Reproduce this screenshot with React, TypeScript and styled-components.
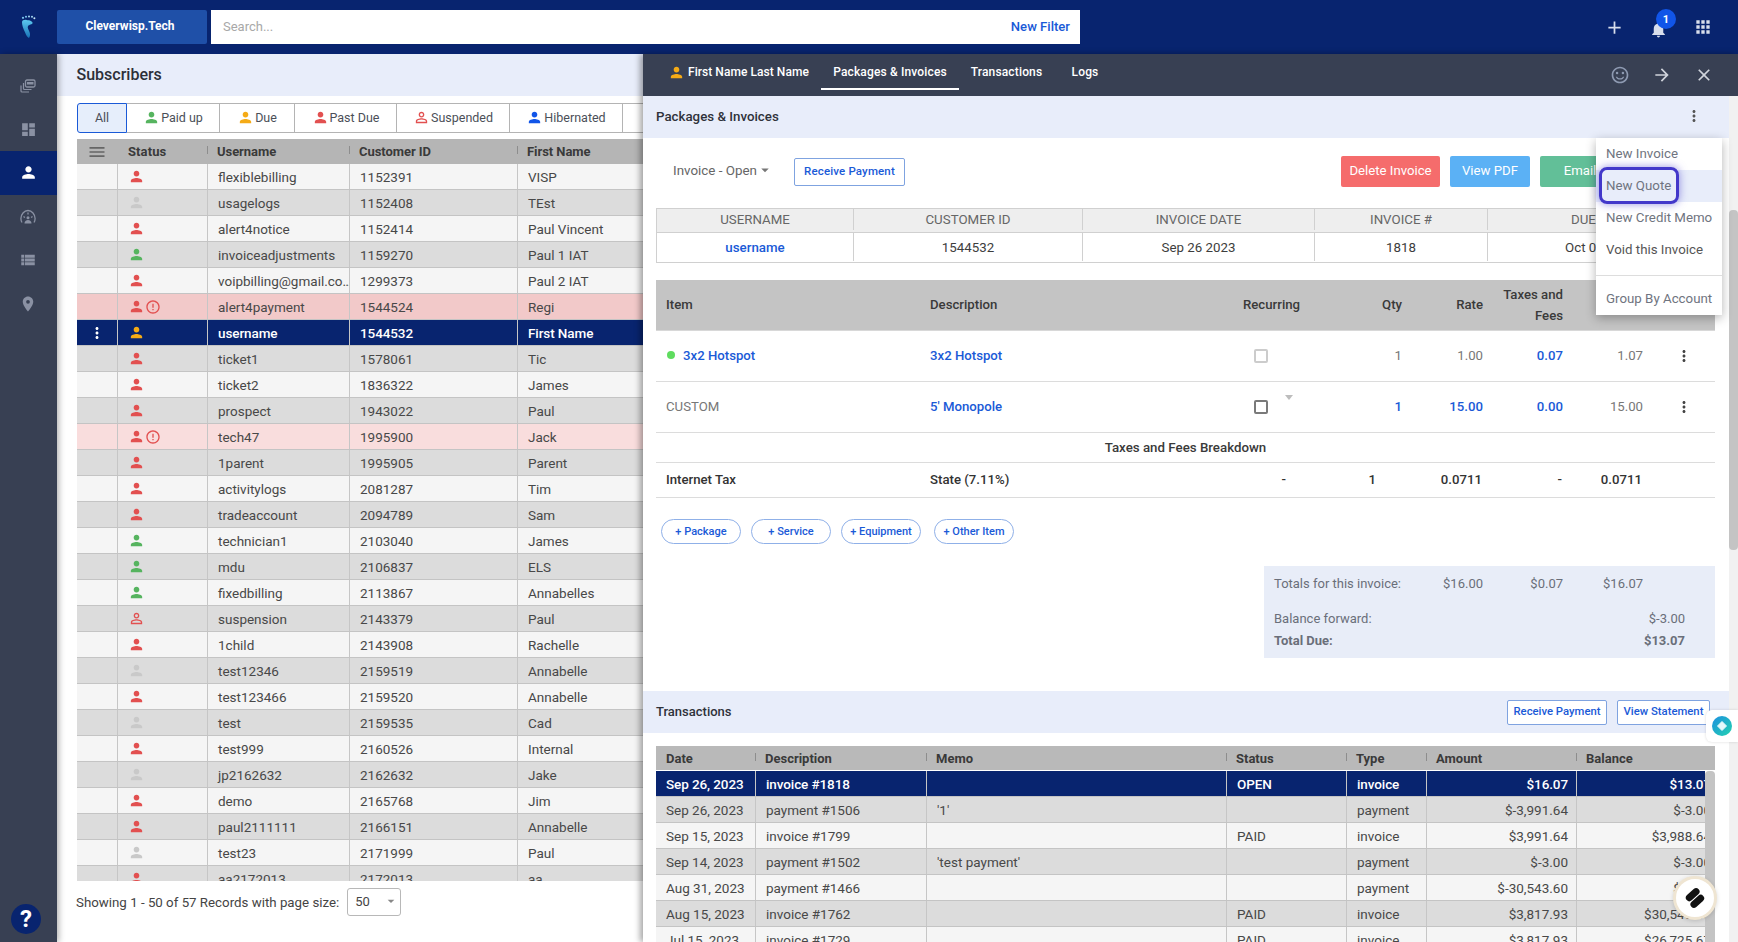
import React from "react";
import styled, { createGlobalStyle } from "styled-components";
import {
  MdAdd, MdApps, MdArrowForward, MdArrowDropDown, MdClose, MdDashboard, MdErrorOutline, MdLocationOn,
  MdMenu, MdMoreVert, MdNotifications, MdOutlineSentimentSatisfiedAlt, MdPerson, MdPersonOutline, MdViewList,
} from "react-icons/md";

const Global = createGlobalStyle`
  html, body { margin: 0; padding: 0; height: 100%; overflow: hidden; background: #fff; }
  body { font-family: Roboto, "Liberation Sans", sans-serif; color: #444; }
  #root { height: 100%; }
  * { box-sizing: border-box; }
`;

const C = {
  navy: "#08246f",
  slate: "#384053",
  band: "#e8edfa",
  blue: "#1a5ad7",
  light: "#f5f5f5",
  dark: "#dcdcdc",
  line: "#c6c6c6",
};

const Page = styled.div`
  width: 1738px; height: 942px; display: flex; flex-direction: column; overflow: hidden; position: relative;
`;
const Topbar = styled.header`
  height: 54px; flex: none; background: ${C.navy}; display: flex; align-items: center;
`;
const LogoCell = styled.div`
  width: 57px; flex: none; display: flex; justify-content: center; align-items: center; svg { margin-left: -1px; }
`;
const Tenant = styled.div`
  width: 150px; height: 34px; background: #1f50a8; color: #fff; border-radius: 2px; font-size: 12px; font-weight: 700;
  display: flex; align-items: center; justify-content: center; margin-right: 4px; padding: 0 4px 2px 0;
`;
const SearchBox = styled.div`
  width: 869px; height: 34px; background: #fff; display: flex; align-items: center; justify-content: space-between;
  padding: 0 10px 2px 12px; font-size: 13px; color: #a8a8a8;
`;
const NewFilter = styled.span`
  color: ${C.blue}; font-weight: 500; font-size: 13.1px;
`;
const TopIcons = styled.div`
  margin-left: auto; display: flex; align-items: center; gap: 24px; padding-right: 25px; color: #d8deec;
`;
const BellWrap = styled.div`
  position: relative; display: flex; margin: 4px 1px 0 0;
`;
const Badge = styled.span`
  position: absolute; left: 7px; top: -10.500px; width: 20px; height: 20px; border-radius: 50%; background: #1155e8; color: #fff;
  font-size: 11px; font-weight: 700; display: flex; align-items: center; justify-content: center;
`;
const Body = styled.div`
  flex: 1; display: flex; min-height: 0;
`;
const Sidebar = styled.nav`
  width: 57px; flex: none; background: ${C.slate}; padding-top: 10px; display: flex; flex-direction: column; position: relative; z-index: 2;
  box-shadow: 2px 0 6px rgba(0,0,0,.3);
`;
const SideItem = styled.div<{ $active?: boolean }>`
  height: 43.6px; display: flex; align-items: center; justify-content: center; padding-right: 1px; color: ${p => (p.$active ? "#fff" : "#8a91a3")};
  background: ${p => (p.$active ? C.navy : "transparent")};
`;
const HelpBubble = styled.div`
  position: absolute; left: 11px; bottom: 8px; width: 30px; height: 30px; border-radius: 50%; background: ${C.navy}; color: #fff;
  font-size: 24px; font-weight: 700; display: flex; align-items: center; justify-content: center;
`;
const Main = styled.main`
  flex: 1; min-width: 0; overflow: hidden; display: flex; flex-direction: column; background: #fff;
`;
const MainHead = styled.div`
  height: 42px; flex: none; background: ${C.band}; display: flex; align-items: center; padding: 0 0 2px 19.500px;
  font-size: 16px; font-weight: 500; color: #2c2f38;
`;
const Filters = styled.div`
  display: flex; margin: 7px 0 6px 20px; height: 30px; width: 640px; flex: none;
`;
const FilterTab = styled.div<{ $w: number; $active?: boolean }>`
  width: ${p => p.$w}px; flex: none; display: flex; align-items: center; justify-content: center; gap: 1px; font-size: 12.5px; color: #4b4f58;
  border: 1px solid ${p => (p.$active ? C.blue : "#b4b4b4")}; border-left-width: ${p => (p.$active ? 1 : 0)}px; padding-bottom: 1px;
  background: ${p => (p.$active ? "#e6eefb" : "#fff")};
  border-radius: ${p => (p.$active ? "3px 0 0 3px" : "0")};
`;
const Grid = styled.div`
  margin-left: 20px; width: 640px; height: 742px; flex: none; overflow: hidden;
`;
const GridHead = styled.div`
  height: 25px; display: flex; background: #b5b5b5; font-size: 13px; font-weight: 700; color: #3a3a3a; letter-spacing: -.05px;
`;
const HeadCell = styled.div<{ $w: number; $right?: boolean }>`
  width: ${p => p.$w}px; flex: none; display: flex; align-items: center; padding-left: 10px; position: relative;
  justify-content: ${p => (p.$right ? "flex-end" : "flex-start")};
  &::after { content: ""; position: absolute; left: 0; top: 7px; width: 1px; height: 8px; background: #8d8d8d; }
`;
const PlainHeadCell = styled(HeadCell)`
  &::after { display: none; }
`;
const StatusHead = styled(PlainHeadCell)`
  padding-left: 11px; letter-spacing: .1px;
`;
const MenuCell = styled(PlainHeadCell)`
  justify-content: center; padding: 0; color: #666;
`;
const GridRow = styled.div<{ $bg: string; $selected?: boolean }>`
  height: 26px; display: flex; background: ${p => p.$bg}; font-size: 13.5px;
  color: ${p => (p.$selected ? "#fff" : "#484848")}; border-bottom: 1px solid #c4c4c4;
  font-weight: ${p => (p.$selected ? 500 : 400)}; letter-spacing: ${p => (p.$selected ? "-.1px" : "0")};
`;
const TxRow = styled(GridRow)`
  width: 1063px;
  & > div:first-child { border-left: 0; }
`;
const GridCell = styled.div<{ $w: number; $right?: boolean }>`
  width: ${p => p.$w}px; flex: none; display: flex; align-items: center; padding: 0 8px 0 10px; border-left: 1px solid #c6c6c6;
  white-space: nowrap; overflow: hidden; justify-content: ${p => (p.$right ? "flex-end" : "flex-start")};
`;
const UserCell = styled(GridCell)`
  padding-right: 0;
`;
const ActionCell = styled.div<{ $w: number }>`
  width: ${p => p.$w}px; flex: none; display: flex; align-items: center; justify-content: center; color: #fff;
`;
const StatusCell = styled(GridCell)`
  padding-left: 9.500px; gap: 0;
`;
const GridFoot = styled.div`
  display: flex; align-items: center; gap: 8px; margin: 7px 0 0 19px; font-size: 13.3px; color: #444;
`;
const PageSize = styled.div`
  width: 54px; height: 28px; border: 1px solid #b8b8b8; border-radius: 3px; padding: 0 0 2px 7px; display: flex; align-items: center;
  justify-content: space-between; font-size: 13px; color: #444;
  svg { color: #888; margin-right: 1px; }
`;

const Detail = styled.aside`
  width: 1095px; flex: none; display: flex; flex-direction: column; background: #fff; position: relative; z-index: 3;
  box-shadow: -3px 0 6px rgba(0,0,0,.35);
`;
const DetailBar = styled.div`
  height: 42px; flex: none; background: ${C.slate}; display: flex; align-items: flex-start; color: #fff; font-size: 12px; font-weight: 500;
  letter-spacing: .15px; padding-left: 25px; position: relative;
`;
const Tab = styled.div<{ $active?: boolean; $w: number }>`
  width: ${p => p.$w}px; height: 36px; flex: none; display: flex; align-items: center; justify-content: center; gap: 3px; padding-top: 2px;
  border-bottom: 2px solid ${p => (p.$active ? "#fff" : "transparent")};
`;
const NameTab = styled(Tab)`
  justify-content: flex-start; letter-spacing: .05px;
`;
const BarIcons = styled.div`
  margin-left: auto; height: 42px; display: flex; align-items: center; gap: 22px; padding-right: 24px; color: #8e9ab2;
`;
const DetailBody = styled.div`
  flex: 1; display: flex; min-height: 0;
`;
const DetailScroll = styled.div`
  flex: 1; min-width: 0; overflow: hidden; display: flex; flex-direction: column;
`;
const Track = styled.div`
  width: 9px; flex: none; background: #f1f1f1; padding-top: 114px;
`;
const Thumb = styled.div`
  height: 340px; background: #c4c4c4; border-radius: 4px;
`;
const Band = styled.div`
  height: 42px; flex: none; background: ${C.band}; display: flex; align-items: center; padding: 0 14px 2px 13px; font-size: 13.300px; font-weight: 500; color: #2f323a;
`;
const BandDots = styled.div`
  margin-left: auto; margin-right: 12px; display: flex; color: #555;
`;
const InvoiceTools = styled.div`
  height: 70px; flex: none; display: flex; align-items: center; padding: 0 0 2px 30px; position: relative;
`;
const InvoiceState = styled.div`
  display: flex; align-items: center; font-size: 13.4px; color: #666; width: 121px; margin-top: -4px;
  svg { color: #777; margin-left: -1px; }
`;
const OutlineBtn = styled.div<{ $w: number }>`
  width: ${p => p.$w}px; height: 28px; flex: none; border: 1px solid #7fa3e0; border-radius: 2px; background: #fff; color: ${C.blue}; font-size: 11.5px;
  font-weight: 500; letter-spacing: .15px; display: flex; align-items: center; justify-content: center; padding-bottom: 2px;
`;
const SolidBtn = styled.div<{ $w: number; $bg: string }>`
  width: ${p => p.$w}px; height: 31px; flex: none; border-radius: 2px; background: ${p => p.$bg}; color: #fff; font-size: 13.2px; display: flex; align-items: center; justify-content: center; padding-bottom: 2px;
`;
const SolidGroup = styled.div`
  position: absolute; left: 698px; top: 18px; display: flex; gap: 10px;
`;
const InfoTable = styled.div`
  margin: 0 0 0 13px; width: 1059px; flex: none; border: 1px solid #d0d0d0;
`;
const InfoRow = styled.div<{ $head?: boolean }>`
  display: flex; height: ${p => (p.$head ? 24 : 29)}px; background: ${p => (p.$head ? "#eeeeee" : "#fff")};
  border-bottom: ${p => (p.$head ? "1px solid #d0d0d0" : "0")}; padding-bottom: ${p => (p.$head ? 2 : 1)}px;
  font-size: 13.3px; color: ${p => (p.$head ? "#666" : "#3d3d3d")};
`;
const InfoCell = styled.div<{ $w: number; $link?: boolean }>`
  width: ${p => p.$w}px; flex: none; display: flex; align-items: center; justify-content: center; position: relative;
  color: ${p => (p.$link ? C.blue : "inherit")}; font-weight: ${p => (p.$link ? 500 : "inherit")};
  border-left: 1px solid #d0d0d0; margin-bottom: ${p => (p.$w ? 0 : 0)}px;
  &:first-child { border-left: 0; }
`;
const ItemsTable = styled.div`
  margin: 17px 0 0 13px; width: 1059px; flex: none;
`;
const ItemsHead = styled.div`
  height: 51px; display: flex; align-items: center; background: #c4c4c4; font-size: 13.2px; font-weight: 500; color: #3a3a3a; border-bottom: 1px solid #d8d8d8; padding-bottom: 1px;
`;
const ItemRow = styled.div<{ $h: number; $bold?: boolean }>`
  height: ${p => p.$h}px; display: flex; align-items: center; border-bottom: 1px solid #dcdcdc; font-size: 13.2px; color: ${p => (p.$bold ? "#333" : "#777")};
  font-weight: ${p => (p.$bold ? 500 : 400)}; padding-bottom: 1px;
`;
const ItemCell = styled.div<{ $w: number; $right?: boolean; $link?: boolean; $dark?: boolean }>`
  width: ${p => p.$w}px; flex: none; display: flex; align-items: center; position: relative; white-space: nowrap;
  justify-content: ${p => (p.$right ? "flex-end" : "flex-start")};
  text-align: ${p => (p.$right ? "right" : "left")};
  color: ${p => (p.$link ? C.blue : p.$dark ? "#444" : "inherit")}; font-weight: ${p => (p.$link ? 500 : "inherit")};
  line-height: 21px;
`;
const CheckCell = styled(ItemCell)`
  padding-left: 11px;
`;
const PadText = styled.span`
  padding-left: 10px;
`;
const BreakdownTitle = styled.div`
  width: 100%; text-align: center; font-size: 13.300px; font-weight: 500; color: #3a3a3a;
`;
const GreenDot = styled.span`
  width: 8px; height: 8px; border-radius: 50%; background: #5fdc5f; margin: -2px 8px 0 11px; flex: none;
`;
const Check = styled.span<{ $strong?: boolean }>`
  width: 14px; height: 14px; border: 2px solid ${p => (p.$strong ? "#7a7a7a" : "#cccccc")}; border-radius: 2px; background: #fff;
`;
const TinyCaret = styled.span`
  position: absolute; left: 42px; top: -5px; width: 0; height: 0; border: 4px solid transparent; border-top: 5px solid #bdbdbd;
`;
const Pills = styled.div`
  display: flex; margin: 21px 0 0 18px; gap: 10px; flex: none;
`;
const Pill = styled.div`
  width: 80px; height: 25px; border: 1px solid #8fb0e8; border-radius: 13px; display: flex; align-items: center; justify-content: center; padding-bottom: 1px;
  color: ${C.blue}; font-size: 11px; font-weight: 500; background: #fff; &:last-child { margin-left: 3px; }
`;
const Totals = styled.div`
  margin: 22px 0 0 621px; width: 451px; height: 92px; flex: none; background: #e8edf8; font-size: 13px; color: #6a6f7a; padding: 7px 30px 0 10px;
`;
const TotalLine = styled.div<{ $h: number; $bold?: boolean; $gap?: number }>`
  height: ${p => p.$h}px; display: flex; align-items: center; font-weight: ${p => (p.$bold ? 700 : 400)}; margin-top: ${p => p.$gap ?? 0}px;
`;
const TotalLabel = styled.div`
  margin-right: auto;
`;
const TotalNum = styled.div<{ $w: number }>`
  width: ${p => p.$w}px; text-align: right; flex: none;
`;
const TxBand = styled(Band)`
  margin-top: 33px; gap: 10px; font-size: 13px;
`;
const TxBtnWrap = styled.div`
  margin: 2px 5px 0 auto; display: flex; gap: 10px;
`;
const TxBtn = styled(OutlineBtn)`
  height: 25px; font-size: 11.3px; letter-spacing: 0; padding-bottom: 1px;
`;
const TxGrid = styled.div`
  margin: 13px 0 0 13px; width: 1059px; flex: 1; min-height: 0; overflow: hidden; position: relative;
`;
const TxHead = styled.div`
  height: 25px; display: flex; background: #b9b9b9; font-size: 13px; font-weight: 700; color: #3a3a3a; width: 1063px; border-bottom: 1px solid #fff;
`;
const TxRowsClip = styled.div`
  width: 1049px; overflow: hidden;
`;
const TxScroll = styled.div`
  position: absolute; right: 0; top: 25px; bottom: 0; width: 10px; background: #c4c4c4; border-radius: 4px 4px 0 0;
`;
const Dropdown = styled.div`
  position: absolute; left: 953px; top: 84px; width: 126px; height: 177px; background: #fff; box-shadow: 0 3px 10px rgba(0,0,0,.3); z-index: 5;
  font-size: 13.3px; color: #6f7480; display: flex; flex-direction: column;
`;
const DropItem = styled.div<{ $hover?: boolean; $dark?: boolean }>`
  height: 32px; flex: none; display: flex; align-items: center; padding: 0 0 2px 10px; position: relative; white-space: nowrap;
  background: ${p => (p.$hover ? "#e8edfa" : "transparent")}; color: ${p => (p.$dark ? "#555" : "inherit")};
`;
const FocusRing = styled.span`
  position: absolute; left: 3px; top: -3px; width: 80px; height: 37px; border: 3px solid #4338ca; border-radius: 8px;
  box-shadow: 0 0 8px rgba(67,56,202,.55);
`;
const DropDivider = styled.div`
  height: 1px; background: #ddd; margin-top: 9px;
`;
const DropFoot = styled(DropItem)`
  margin-top: 7px;
`;
const SideWidget = styled.div`
  position: absolute; right: 0; top: 710px; width: 32px; height: 32px; background: #fff; border-radius: 6px 0 0 6px; z-index: 6;
  display: flex; align-items: center; justify-content: center; box-shadow: 0 0 3px rgba(0,0,0,.15);
`;
const FloatBtn = styled.div`
  position: absolute; left: 1673px; top: 876px; width: 44px; height: 44px; border-radius: 50%; background: #fff; border: 3px solid #efe5d2; z-index: 6;
  display: flex; align-items: center; justify-content: center; box-shadow: 0 1px 4px rgba(0,0,0,.15);
`;

type St = "red" | "gray" | "green" | "orange" | "outline";
const stColors: Record<St, string> = { red: "#e25050", gray: "#c9c9c9", green: "#56b45f", orange: "#f5ab16", outline: "#e25050" };

const subs: [string, string, string, St, string?][] = [
  ["flexiblebilling", "1152391", "VISP", "red"],
  ["usagelogs", "1152408", "TEst", "gray"],
  ["alert4notice", "1152414", "Paul Vincent", "red"],
  ["invoiceadjustments", "1159270", "Paul 1 IAT", "green"],
  ["voipbilling@gmail.co…", "1299373", "Paul 2 IAT", "red"],
  ["alert4payment", "1544524", "Regi", "red", "#f2c9c9"],
  ["username", "1544532", "First Name", "orange", C.navy],
  ["ticket1", "1578061", "Tic", "red"],
  ["ticket2", "1836322", "James", "red"],
  ["prospect", "1943022", "Paul", "red"],
  ["tech47", "1995900", "Jack", "red", "#f9dddd"],
  ["1parent", "1995905", "Parent", "red"],
  ["activitylogs", "2081287", "Tim", "red"],
  ["tradeaccount", "2094789", "Sam", "red"],
  ["technician1", "2103040", "James", "green"],
  ["mdu", "2106837", "ELS", "green"],
  ["fixedbilling", "2113867", "Annabelles", "green"],
  ["suspension", "2143379", "Paul", "outline"],
  ["1child", "2143908", "Rachelle", "red"],
  ["test12346", "2159519", "Annabelle", "gray"],
  ["test123466", "2159520", "Annabelle", "red"],
  ["test", "2159535", "Cad", "gray"],
  ["test999", "2160526", "Internal", "red"],
  ["jp2162632", "2162632", "Jake", "gray"],
  ["demo", "2165768", "Jim", "red"],
  ["paul2111111", "2166151", "Annabelle", "red"],
  ["test23", "2171999", "Paul", "gray"],
  ["aa2172013", "2172013", "aa", "red"],
];

const tx = [
  ["Sep 26, 2023", "invoice #1818", "", "OPEN", "invoice", "$16.07", "$13.07"],
  ["Sep 26, 2023", "payment #1506", "'1'", "", "payment", "$-3,991.64", "$-3.00"],
  ["Sep 15, 2023", "invoice #1799", "", "PAID", "invoice", "$3,991.64", "$3,988.64"],
  ["Sep 14, 2023", "payment #1502", "'test payment'", "", "payment", "$-3.00", "$-3.00"],
  ["Aug 31, 2023", "payment #1466", "", "", "payment", "$-30,543.60", "$-3.00"],
  ["Aug 15, 2023", "invoice #1762", "", "PAID", "invoice", "$3,817.93", "$30,540.60"],
  ["Jul 15, 2023", "invoice #1729", "", "PAID", "invoice", "$3,817.93", "$26,725.67"],
];
const txW = [99, 171, 300, 120, 80, 150, 143];
const subW = [40, 90, 142, 168, 140];

function Person({ st, size = 17 }: { st: St; size?: number }) {
  const Icon = st === "outline" ? MdPersonOutline : MdPerson;
  return <Icon size={size} color={stColors[st]} />;
}

function FootLogo() {
  return (
    <svg width="16" height="24" viewBox="0 0 16 24">
      <defs>
        <linearGradient id="ft" x1="0" y1="0" x2="0" y2="1">
          <stop offset="0" stopColor="#5cc8ee" />
          <stop offset="1" stopColor="#1772b8" />
        </linearGradient>
      </defs>
      <circle cx="3" cy="2.800" r="1.100" fill="#7cc6ee" />
      <circle cx="6" cy="1.800" r="1" fill="#7cc6ee" />
      <circle cx="9" cy="1.400" r="1" fill="#a4d8f2" />
      <circle cx="12" cy="1.800" r="1" fill="#a4d8f2" />
      <circle cx="14.400" cy="3.200" r="1" fill="#c9e6f4" />
      <path d="M2 7.200C2 5.400 4 4.700 6.500 4.900c3.400.3 6.300 1.200 6.100 3.200-.2 1.700-3.600 1.500-4.600 3-.9 1.400.6 3.800 1.500 6 .8 2 .8 4.300-.5 5.800-1.300-.4-2.800-2.500-4-5.700C3.200 13.400 2 10.100 2 7.200Z" fill="url(#ft)" />
    </svg>
  );
}

function LayersIcon() {
  return (
    <svg width="16" height="14" viewBox="0 0 16 14" fill="none" stroke="currentColor">
      <rect x="5.500" y="1" width="9.500" height="7" rx="1.500" strokeWidth="1.300" />
      <rect x="7" y="3" width="6.500" height="2.500" fill="currentColor" stroke="none" />
      <path d="M3.500 4v5.500a1 1 0 0 0 1 1h7" strokeWidth="1.200" />
      <path d="M1 6.500v5.500a1 1 0 0 0 1 1h7" strokeWidth="1.200" />
    </svg>
  );
}

function GaugeIcon() {
  return (
    <svg width="16" height="15" viewBox="0 0 16 15" fill="none" stroke="currentColor" strokeWidth="1.300">
      <path d="M2 13.500C1.200 12.300.9 11 .9 9.600.9 5.400 4.100 1.500 8 1.500s7.100 3.900 7.100 8.100c0 1.400-.3 2.700-1.100 3.900" />
      <path d="M8 3.500v2M3.500 7.500l1.400 1M12.500 7.500l-1.400 1" />
      <circle cx="8" cy="8.700" r="1.500" fill="currentColor" stroke="none" />
      <path d="M4.500 14.500c0-2.100 1.500-3.500 3.500-3.500s3.500 1.400 3.500 3.500Z" fill="currentColor" stroke="none" />
    </svg>
  );
}

function SwirlIcon() {
  return (
    <svg width="22" height="22" viewBox="0 0 22 22">
      <g transform="rotate(-42 11 11)">
        <rect x="3.500" y="3.500" width="16" height="7" rx="3.500" fill="#111" />
        <rect x="2.500" y="11.500" width="16" height="7" rx="3.500" fill="#111" />
      </g>
    </svg>
  );
}

function GemIcon() {
  return (
    <svg width="20" height="20" viewBox="0 0 20 20">
      <defs>
        <linearGradient id="gem" x1="0" y1="0" x2="1" y2="1">
          <stop offset="0" stopColor="#1d8fe0" />
          <stop offset="1" stopColor="#22d3b0" />
        </linearGradient>
      </defs>
      <circle cx="10" cy="10" r="10" fill="url(#gem)" />
      <path d="M10 5.500 14.500 10 10 14.500 5.500 10Z" fill="#e4f9fb" stroke="#e4f9fb" strokeLinejoin="round" />
    </svg>
  );
}

export default function App() {
  return (
    <Page>
      <Global />
      <Topbar>
        <LogoCell><FootLogo /></LogoCell>
        <Tenant>Cleverwisp.Tech</Tenant>
        <SearchBox>
          <span>Search...</span>
          <NewFilter>New Filter</NewFilter>
        </SearchBox>
        <TopIcons>
          <MdAdd size={21} />
          <BellWrap>
            <MdNotifications size={19} />
            <Badge>1</Badge>
          </BellWrap>
          <MdApps size={20} />
        </TopIcons>
      </Topbar>
      <Body>
        <Sidebar>
          <SideItem><LayersIcon /></SideItem>
          <SideItem><MdDashboard size={17} /></SideItem>
          <SideItem $active><MdPerson size={19} /></SideItem>
          <SideItem><GaugeIcon /></SideItem>
          <SideItem><MdViewList size={18} /></SideItem>
          <SideItem><MdLocationOn size={18} /></SideItem>
          <HelpBubble>?</HelpBubble>
        </Sidebar>
        <Main>
          <MainHead>Subscribers</MainHead>
          <Filters>
            <FilterTab $w={50} $active>All</FilterTab>
            <FilterTab $w={93}><Person st="green" />Paid up</FilterTab>
            <FilterTab $w={75}><Person st="orange" />Due</FilterTab>
            <FilterTab $w={102}><Person st="red" />Past Due</FilterTab>
            <FilterTab $w={113}><Person st="outline" />Suspended</FilterTab>
            <FilterTab $w={113}><MdPerson size={17} color="#1155e8" />Hibernated</FilterTab>
            <FilterTab $w={90} />
          </Filters>
          <Grid>
            <GridHead>
              <MenuCell $w={subW[0]}><MdMenu size={20} /></MenuCell>
              <StatusHead $w={subW[1]}>Status</StatusHead>
              <HeadCell $w={subW[2]}>Username</HeadCell>
              <HeadCell $w={subW[3]}>Customer ID</HeadCell>
              <HeadCell $w={subW[4]}>First Name</HeadCell>
            </GridHead>
            {subs.map(([user, id, first, st, bg], i) => {
              const selected = st === "orange";
              return (
                <GridRow key={user} $bg={bg ?? (i % 2 ? C.dark : C.light)} $selected={selected}>
                  <ActionCell $w={subW[0]}>{selected && <MdMoreVert size={18} />}</ActionCell>
                  <StatusCell $w={subW[1]}>
                    <Person st={st} />
                    {bg && !selected && <MdErrorOutline size={16} color="#e25050" />}
                  </StatusCell>
                  <UserCell $w={subW[2]}>{user}</UserCell>
                  <GridCell $w={subW[3]}>{id}</GridCell>
                  <GridCell $w={subW[4]}>{first}</GridCell>
                </GridRow>
              );
            })}
          </Grid>
          <GridFoot>
            Showing 1 - 50 of 57 Records with page size:
            <PageSize>50<MdArrowDropDown size={16} /></PageSize>
          </GridFoot>
        </Main>
        <Detail>
          <DetailBar>
            <NameTab $w={153}><MdPerson size={17} color="#f5ab16" />First Name Last Name</NameTab>
            <Tab $w={138} $active>Packages &amp; Invoices</Tab>
            <Tab $w={95}>Transactions</Tab>
            <Tab $w={62}>Logs</Tab>
            <BarIcons>
              <MdOutlineSentimentSatisfiedAlt size={20} />
              <MdArrowForward size={20} color="#d0d4dc" />
              <MdClose size={20} color="#d0d4dc" />
            </BarIcons>
          </DetailBar>
          <DetailBody>
            <DetailScroll>
              <Band>
                Packages &amp; Invoices
                <BandDots><MdMoreVert size={18} /></BandDots>
              </Band>
              <InvoiceTools>
                <InvoiceState>Invoice - Open<MdArrowDropDown size={18} /></InvoiceState>
                <OutlineBtn $w={111}>Receive Payment</OutlineBtn>
                <SolidGroup>
                  <SolidBtn $w={99} $bg="#f56c6c">Delete Invoice</SolidBtn>
                  <SolidBtn $w={80} $bg="#5bb1f5">View PDF</SolidBtn>
                  <SolidBtn $w={80} $bg="#62bf98">Email</SolidBtn>
                </SolidGroup>
              </InvoiceTools>
              <InfoTable>
                <InfoRow $head>
                  <InfoCell $w={196}>USERNAME</InfoCell>
                  <InfoCell $w={229}>CUSTOMER ID</InfoCell>
                  <InfoCell $w={232}>INVOICE DATE</InfoCell>
                  <InfoCell $w={173}>INVOICE #</InfoCell>
                  <InfoCell $w={227}>DUE DATE</InfoCell>
                </InfoRow>
                <InfoRow>
                  <InfoCell $w={196} $link>username</InfoCell>
                  <InfoCell $w={229}>1544532</InfoCell>
                  <InfoCell $w={232}>Sep 26 2023</InfoCell>
                  <InfoCell $w={173}>1818</InfoCell>
                  <InfoCell $w={227}>Oct 01 2023</InfoCell>
                </InfoRow>
              </InfoTable>
              <ItemsTable>
                <ItemsHead>
                  <ItemCell $w={274}><PadText>Item</PadText></ItemCell>
                  <ItemCell $w={313}>Description</ItemCell>
                  <ItemCell $w={56}>Recurring</ItemCell>
                  <ItemCell $w={103} $right>Qty</ItemCell>
                  <ItemCell $w={81} $right>Rate</ItemCell>
                  <ItemCell $w={80} $right>Taxes and<br />Fees</ItemCell>
                </ItemsHead>
                <ItemRow $h={51}>
                  <ItemCell $w={274} $link><GreenDot />3x2 Hotspot</ItemCell>
                  <ItemCell $w={313} $link>3x2 Hotspot</ItemCell>
                  <CheckCell $w={56}><Check /></CheckCell>
                  <ItemCell $w={103} $right>1</ItemCell>
                  <ItemCell $w={81} $right>1.00</ItemCell>
                  <ItemCell $w={80} $right $link>0.07</ItemCell>
                  <ItemCell $w={80} $right>1.07</ItemCell>
                  <ItemCell $w={50} $right $dark><MdMoreVert size={18} /></ItemCell>
                </ItemRow>
                <ItemRow $h={51}>
                  <ItemCell $w={274}><PadText>CUSTOM</PadText></ItemCell>
                  <ItemCell $w={313} $link>5' Monopole</ItemCell>
                  <CheckCell $w={56}><Check $strong /><TinyCaret /></CheckCell>
                  <ItemCell $w={103} $right $link>1</ItemCell>
                  <ItemCell $w={81} $right $link>15.00</ItemCell>
                  <ItemCell $w={80} $right $link>0.00</ItemCell>
                  <ItemCell $w={80} $right>15.00</ItemCell>
                  <ItemCell $w={50} $right $dark><MdMoreVert size={18} /></ItemCell>
                </ItemRow>
                <ItemRow $h={30}><BreakdownTitle>Taxes and Fees Breakdown</BreakdownTitle></ItemRow>
                <ItemRow $h={35} $bold>
                  <ItemCell $w={274}><PadText>Internet Tax</PadText></ItemCell>
                  <ItemCell $w={313}>State (7.11%)</ItemCell>
                  <ItemCell $w={43} $right>-</ItemCell>
                  <ItemCell $w={90} $right>1</ItemCell>
                  <ItemCell $w={106} $right>0.0711</ItemCell>
                  <ItemCell $w={80} $right>-</ItemCell>
                  <ItemCell $w={80} $right>0.0711</ItemCell>
                </ItemRow>
              </ItemsTable>
              <Pills>
                <Pill>+ Package</Pill>
                <Pill>+ Service</Pill>
                <Pill>+ Equipment</Pill>
                <Pill>+ Other Item</Pill>
              </Pills>
              <Totals>
                <TotalLine $h={21}>
                  <TotalLabel>Totals for this invoice:</TotalLabel>
                  <TotalNum $w={80}>$16.00</TotalNum>
                  <TotalNum $w={80}>$0.07</TotalNum>
                  <TotalNum $w={80}>$16.07</TotalNum>
                  <TotalNum $w={42} />
                </TotalLine>
                <TotalLine $h={21} $gap={14}>
                  <TotalLabel>Balance forward:</TotalLabel>
                  <TotalNum $w={80}>$-3.00</TotalNum>
                </TotalLine>
                <TotalLine $h={23} $bold>
                  <TotalLabel>Total Due:</TotalLabel>
                  <TotalNum $w={80}>$13.07</TotalNum>
                </TotalLine>
              </Totals>
              <TxBand>
                Transactions
                <TxBtnWrap>
                  <TxBtn $w={100}>Receive Payment</TxBtn>
                  <TxBtn $w={93}>View Statement</TxBtn>
                </TxBtnWrap>
              </TxBand>
              <TxGrid>
                <TxHead>
                  {["Date", "Description", "Memo", "Status", "Type", "Amount", "Balance"].map((h, i) =>
                    i === 0 ? <PlainHeadCell key={h} $w={txW[i]}>{h}</PlainHeadCell> : <HeadCell key={h} $w={txW[i]}>{h}</HeadCell>
                  )}
                </TxHead>
                <TxRowsClip>
                  {tx.map((r, i) => (
                    <TxRow key={r[1]} $bg={i === 0 ? C.navy : i % 2 ? C.dark : C.light} $selected={i === 0}>
                      {r.map((v, j) => (
                        <GridCell key={j} $w={txW[j]} $right={j > 4}>{v}</GridCell>
                      ))}
                    </TxRow>
                  ))}
                </TxRowsClip>
                <TxScroll />
              </TxGrid>
            </DetailScroll>
            <Track><Thumb /></Track>
          </DetailBody>
          <Dropdown>
            <DropItem>New Invoice</DropItem>
            <DropItem $hover>New Quote<FocusRing /></DropItem>
            <DropItem>New Credit Memo</DropItem>
            <DropItem $dark>Void this Invoice</DropItem>
            <DropDivider />
            <DropFoot>Group By Account</DropFoot>
          </Dropdown>
        </Detail>
      </Body>
      <SideWidget><GemIcon /></SideWidget>
      <FloatBtn><SwirlIcon /></FloatBtn>
    </Page>
  );
}
